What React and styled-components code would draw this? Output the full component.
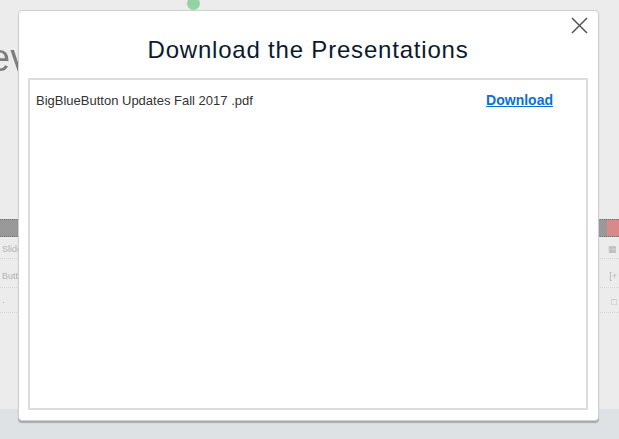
import React from 'react';
import styled, { createGlobalStyle } from 'styled-components';

const GlobalStyle = createGlobalStyle`
  html, body { margin: 0; padding: 0; }
  body {
    font-family: "Liberation Sans", Arial, sans-serif;
    background: #ececec;
    overflow: hidden;
  }
`;

const Page = styled.div`
  position: relative;
  width: 619px;
  height: 439px;
  display: flex;
  flex-direction: column;
  overflow: hidden;
`;

const Stage = styled.div`
  height: 409px;
  background: #ececec;
  display: flex;
  flex-direction: column;
  filter: blur(0.6px);
`;

const BottomBar = styled.div`
  flex: 1;
  background: #dfe2e5;
`;

const Dot = styled.div`
  width: 13px;
  height: 13px;
  border-radius: 50%;
  background: #93d3a2;
  margin: -3px 0 0 187px;
`;

const StageTitle = styled.h1`
  margin: 27px 0 0 -49px;
  font-size: 38px;
  font-weight: 400;
  color: #7d7d7d;
  white-space: nowrap;
`;

const Toolbar = styled.div`
  margin-top: 139px;
  height: 16px;
  background: #999;
  border-top: 1px dotted #777;
  border-bottom: 1px dotted #777;
  display: flex;
  justify-content: flex-end;
`;

const ToolbarRed = styled.div`
  width: 12px;
  background: #d98a88;
`;

const StageRow = styled.div`
  height: ${p => p.h}px;
  margin-top: ${p => p.gap}px;
  border-bottom: 1px dotted #d6d6d6;
  display: flex;
  align-items: center;
  justify-content: space-between;
  padding: 0 2px;
  font-size: 9px;
  color: #b0b0b0;
`;

const Overlay = styled.div`
  position: absolute;
  left: 18px;
  top: 10px;
  width: 581px;
  height: 411px;
  box-sizing: border-box;
  background: #fff;
  border: 1px solid #cfcfcf;
  border-radius: 4px;
  box-shadow: 0 2px 1px rgba(0, 0, 0, 0.25);
  padding: 0 10px 10px 9px;
  display: flex;
  flex-direction: column;
`;

const Header = styled.div`
  position: relative;
  height: 67px;
  display: flex;
  align-items: center;
  justify-content: center;
`;

const Title = styled.h2`
  margin: 11px 0 0;
  font-size: 24px;
  font-weight: 400;
  letter-spacing: 0.8px;
  color: #0c1a30;
`;

const CloseButton = styled.button`
  position: absolute;
  right: -1px;
  top: 4px;
  width: 20px;
  height: 20px;
  padding: 0;
  border: 0;
  background: none;
  display: flex;
  align-items: center;
  justify-content: center;
  cursor: pointer;
`;

const FileBox = styled.div`
  flex: 1;
  border: 2px solid #dcdcdc;
  padding: 12px 33px 0 6px;
`;

const FileRow = styled.div`
  display: grid;
  grid-template-columns: 1fr auto;
  align-items: baseline;
`;

const FileName = styled.span`
  font-size: 13px;
  color: #333;
`;

const DownloadLink = styled.a`
  font-size: 14px;
  font-weight: 700;
  color: #0b6fd6;
  text-decoration: underline;
`;

const App = () => (
  <Page>
    <GlobalStyle />
    <Stage>
      <Dot />
      <StageTitle>Preview</StageTitle>
      <Toolbar>
        <ToolbarRed />
      </Toolbar>
      <StageRow h={18} gap={3}><span>Slide 1</span><span>▦</span></StageRow>
      <StageRow h={22} gap={6}><span>Button</span><span>[+</span></StageRow>
      <StageRow h={20} gap={4}><span>·</span><span>□</span></StageRow>
    </Stage>
    <BottomBar />
    <Overlay>
      <Header>
        <Title>Download the Presentations</Title>
        <CloseButton aria-label="Close">
          <svg width="17" height="17" viewBox="0 0 17 17">
            <path d="M1 1 L16 16 M16 1 L1 16" stroke="#555" strokeWidth="1.5" fill="none" />
          </svg>
        </CloseButton>
      </Header>
      <FileBox>
        <FileRow>
          <FileName>BigBlueButton Updates Fall 2017 .pdf</FileName>
          <DownloadLink href="#">Download</DownloadLink>
        </FileRow>
      </FileBox>
    </Overlay>
  </Page>
);

export default App;
